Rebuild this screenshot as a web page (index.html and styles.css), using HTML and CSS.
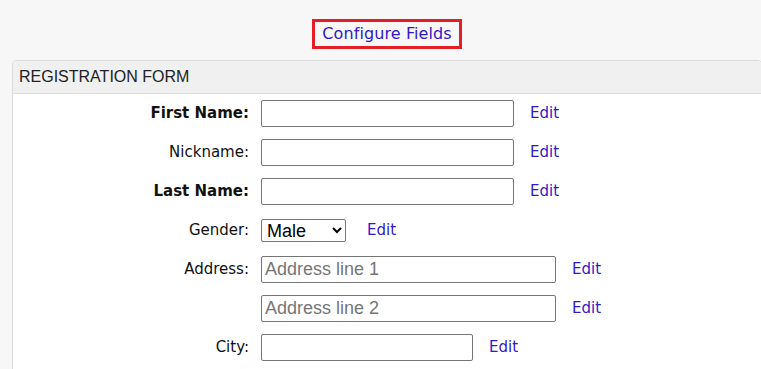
FILE: index.html
```html
<!DOCTYPE html>
<html>
<head>
<meta charset="utf-8">
<link rel="stylesheet" href="styles.css">
</head>
<body>
<div class="top">
  <a class="config" href="#">Configure Fields</a>
</div>
<div class="panel">
  <div class="panel-head">REGISTRATION FORM</div>
  <div class="form">
    <label class="lbl req">First Name:</label>
    <div class="ctl"><input class="txt w-md" type="text"><a class="edit" href="#">Edit</a></div>

    <label class="lbl">Nickname:</label>
    <div class="ctl"><input class="txt w-md" type="text"><a class="edit" href="#">Edit</a></div>

    <label class="lbl req">Last Name:</label>
    <div class="ctl"><input class="txt w-md" type="text"><a class="edit" href="#">Edit</a></div>

    <label class="lbl">Gender:</label>
    <div class="ctl"><select class="sel"><option>Male</option><option>Female</option></select><a class="edit edit-sel" href="#">Edit</a></div>

    <label class="lbl">Address:</label>
    <div class="ctl"><input class="txt w-lg" type="text" placeholder="Address line 1"><a class="edit" href="#">Edit</a></div>

    <span class="lbl"></span>
    <div class="ctl"><input class="txt w-lg" type="text" placeholder="Address line 2"><a class="edit" href="#">Edit</a></div>

    <label class="lbl">City:</label>
    <div class="ctl"><input class="txt w-sm" type="text"><a class="edit" href="#">Edit</a></div>
  </div>
</div>
</body>
</html>
```

FILE: styles.css
```css
html, body {
  margin: 0;
  padding: 0;
}
body {
  background: #f7f7f7;
  font-family: "DejaVu Sans", Tahoma, sans-serif;
  font-size: 15px;
  color: #000;
}
.top {
  width: 750px;
  margin-left: 12px;
  padding-top: 19px;
  text-align: center;
  height: 30px;
}
.config {
  display: inline-block;
  border: 3px solid #e41e26;
  padding: 3px 7px 3px 7px;
  line-height: 18px;
  color: #3318c8;
  text-decoration: none;
  font-size: 16px;
  letter-spacing: 0.1px;
}
.panel {
  margin-top: 11px;
  margin-left: 12px;
  width: 748px;
  background: #fff;
  border: 1px solid #dcdcdc;
  border-radius: 4px 4px 0 0;
  height: 340px;
}
.panel-head {
  background: #f0f0f0;
  border-bottom: 1px solid #dcdcdc;
  border-radius: 4px 4px 0 0;
  height: 32px;
  line-height: 31px;
  padding-left: 6px;
  font-family: "Liberation Sans", Arial, sans-serif;
  font-size: 16px;
  color: #222;
}
.form {
  display: grid;
  grid-template-columns: 248px auto;
  row-gap: 12px;
  padding-top: 6px;
  align-items: center;
}
.lbl {
  text-align: right;
  padding-right: 12px;
  color: #111;
  line-height: 18px;
  position: relative;
  top: -1px;
}
.req {
  font-weight: bold;
}
.ctl {
  display: flex;
  align-items: center;
  height: 27px;
}
.txt {
  box-sizing: border-box;
  height: 27px;
  border: 1px solid #767676;
  border-radius: 2px;
  padding: 0 3px;
  font-family: "Liberation Sans", Arial, sans-serif;
  font-size: 18px;
  margin: 0;
  background: #fff;
}
.txt::placeholder {
  color: #767676;
}
.w-md { width: 253px; }
.w-lg { width: 295px; }
.w-sm { width: 212px; }
.sel {
  box-sizing: border-box;
  width: 85px;
  height: 23px;
  margin: 0;
  padding: 0 0 0 1px;
  font-family: "Liberation Sans", Arial, sans-serif;
  font-size: 18px;
  border: 1px solid #767676;
  border-radius: 2px;
  background: #fff;
  color: #000;
}
.edit {
  margin-left: 16px;
  color: #3318c8;
  text-decoration: none;
  font-size: 15px;
  position: relative;
  top: -1px;
}
.edit-sel {
  margin-left: 21px;
}
```
